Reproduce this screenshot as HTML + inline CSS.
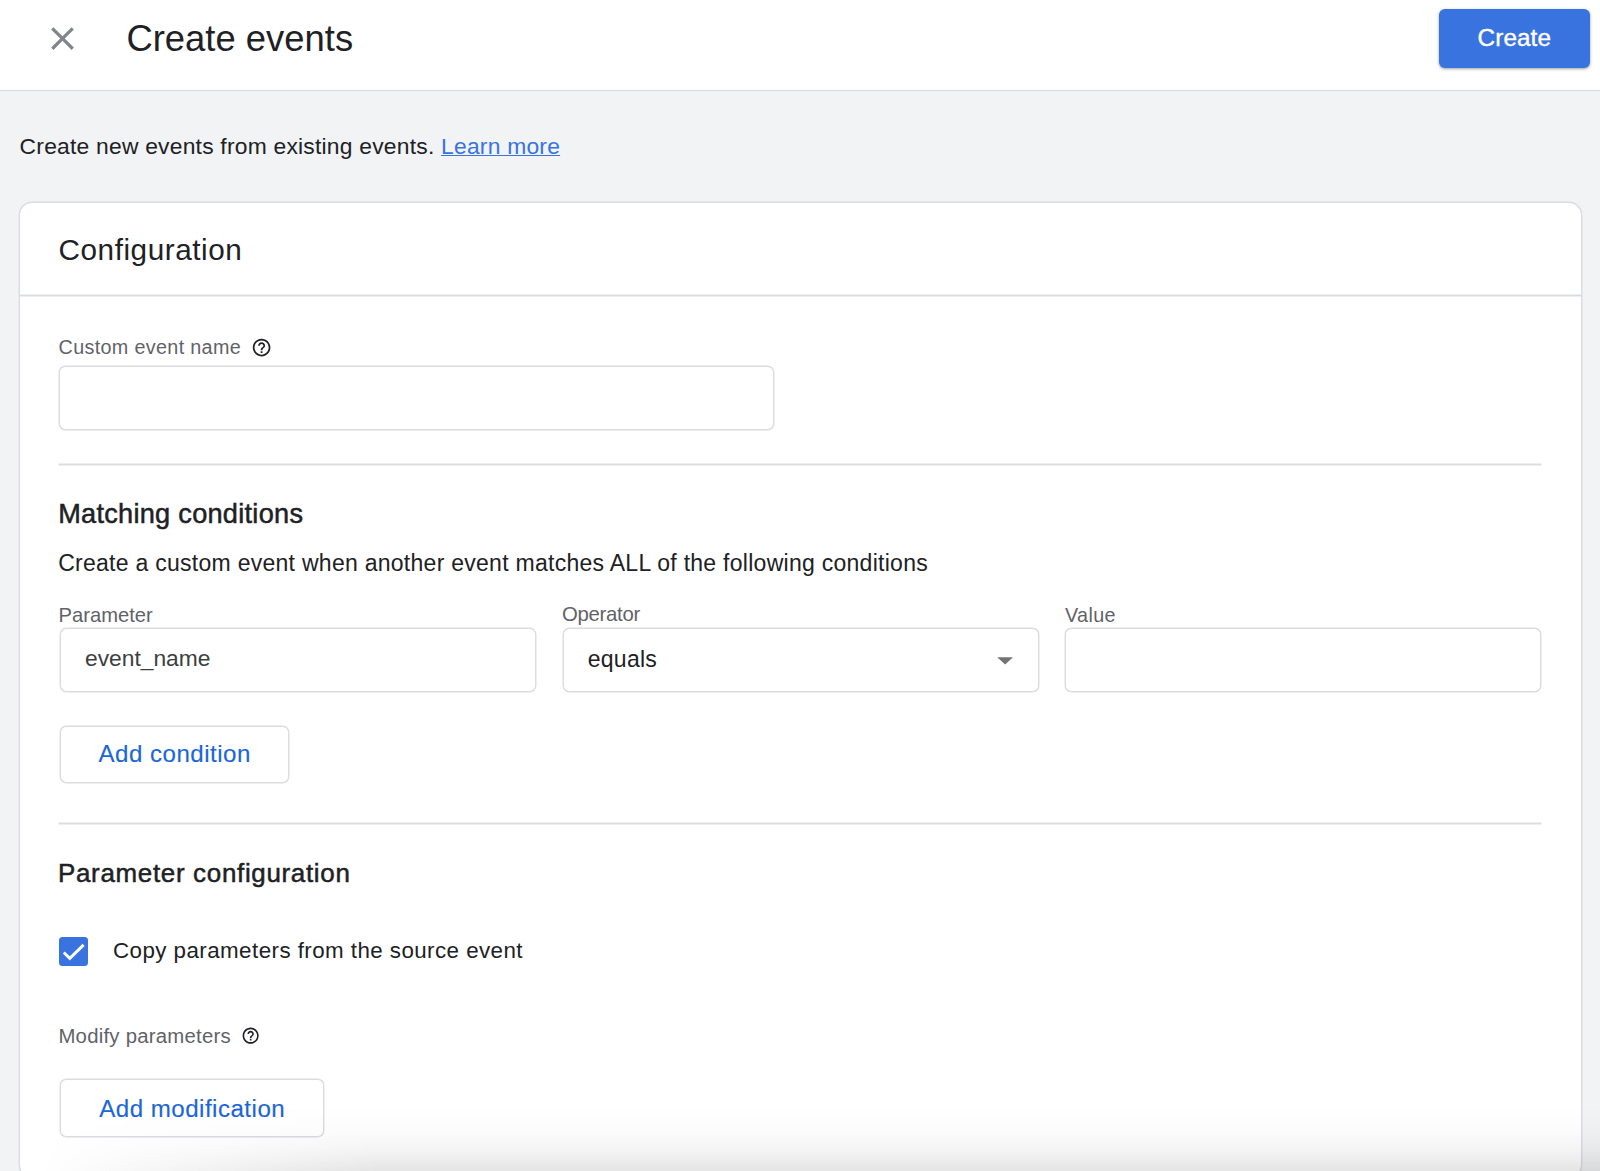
<!DOCTYPE html>
<html><head><meta charset="utf-8"><title>Create events</title>
<style>
html,body{margin:0;padding:0;}
body{width:1600px;height:1171px;overflow:hidden;background:#f1f3f4;position:relative;font-family:"Liberation Sans",sans-serif;}
.abs{position:absolute;}
.t{position:absolute;white-space:nowrap;}
#hdr{position:absolute;left:0;top:0;width:1600px;height:90px;background:#fff;border-bottom:1px solid #dadce0;}
#btn{position:absolute;left:1438.5px;top:9px;width:151.5px;height:58.5px;background:#3873e0;border-radius:6px;box-shadow:0 1px 2px rgba(60,64,67,.3),0 1px 3px 1px rgba(60,64,67,.15);}
#card{position:absolute;left:19px;top:202px;width:1563px;height:976px;background:#fff;border:1px solid #dadce0;border-radius:13px;box-sizing:border-box;box-shadow:0 0 0 .4px #dadce0;}
.hl{position:absolute;height:1px;background:#dadce0;box-shadow:0 0 0 .45px #dadce0;}
.box{position:absolute;border:1px solid #dadce0;border-radius:6.5px;box-sizing:border-box;background:#fff;box-shadow:0 0 0 .45px #dadce0;}
#shadow{position:absolute;left:0;top:1106px;width:1600px;height:65px;background:linear-gradient(to bottom,rgba(0,0,0,0) 0%,rgba(0,0,0,.012) 35%,rgba(0,0,0,.04) 65%,rgba(0,0,0,.075) 85%,rgba(0,0,0,.105) 100%);
 -webkit-mask-image:linear-gradient(to right,transparent 40px,#000 380px);}
</style></head><body>
<div id="hdr"></div>
<svg class="abs" style="left:42.5px;top:18.6px" width="39" height="39" viewBox="0 0 24 24"><path fill="#80868b" d="M19 6.41L17.59 5 12 10.59 6.41 5 5 6.41 10.59 12 5 17.59 6.41 19 12 13.41 17.59 19 19 17.59 13.41 12z"/></svg>
<div id="btn"></div>
<div id="card"></div>
<div class="hl" style="left:20px;top:295px;width:1561px"></div>
<div class="box" style="left:59px;top:366px;width:714.5px;height:64px"></div>
<div class="hl" style="left:59px;top:463.5px;width:1482px"></div>
<div class="box" style="left:59.5px;top:628px;width:476.5px;height:64px"></div>
<div class="box" style="left:562.5px;top:628px;width:476.5px;height:64px"></div>
<div class="box" style="left:1065px;top:628px;width:475.5px;height:64px"></div>
<svg class="abs" style="left:996px;top:655px" width="18" height="11" viewBox="0 0 18 11"><path d="M1.2 2.2h15.8L9.2 9.4z" fill="#737373"/></svg>
<div class="box" style="left:59.5px;top:725.5px;width:229.5px;height:57.5px"></div>
<div class="hl" style="left:59px;top:822.5px;width:1482px"></div>
<svg class="abs" style="left:59.1px;top:936.6px" width="29" height="29" viewBox="0 0 29 29"><rect x="0" y="0" width="29" height="29" rx="3.5" fill="#3873e0"/><path d="M4.8 15.5L10.8 21.4 24.6 7.9" fill="none" stroke="#fff" stroke-width="2.9"/></svg>
<div class="box" style="left:59.5px;top:1079px;width:264px;height:57.5px"></div>
<svg class="abs" style="left:250.75px;top:337.00px" width="21.2" height="21.2" viewBox="0 0 24 24"><path fill="#202124" d="M11 18h2v-2h-2v2zm1-16C6.48 2 2 6.48 2 12s4.48 10 10 10 10-4.48 10-10S17.52 2 12 2zm0 18c-4.41 0-8-3.59-8-8s3.59-8 8-8 8 3.59 8 8-3.59 8-8 8zm0-14c-2.21 0-4 1.79-4 4h2c0-1.1.9-2 2-2s2 .9 2 2c0 2-3 1.75-3 5h2c0-2.25 3-2.5 3-5 0-2.21-1.79-4-4-4z"/></svg>
<svg class="abs" style="left:241.15px;top:1026.25px" width="19.3" height="19.3" viewBox="0 0 24 24"><path fill="#202124" d="M11 18h2v-2h-2v2zm1-16C6.48 2 2 6.48 2 12s4.48 10 10 10 10-4.48 10-10S17.52 2 12 2zm0 18c-4.41 0-8-3.59-8-8s3.59-8 8-8 8 3.59 8 8-3.59 8-8 8zm0-14c-2.21 0-4 1.79-4 4h2c0-1.1.9-2 2-2s2 .9 2 2c0 2-3 1.75-3 5h2c0-2.25 3-2.5 3-5 0-2.21-1.79-4-4-4z"/></svg>
<div class="t" id="title" style="left:126.40px;top:21.00px;font-size:36.38px;line-height:36.38px;color:#202124;font-weight:400;letter-spacing:0.024px;">Create events</div>
<div class="t" id="btntext" style="left:1477.60px;top:25.55px;font-size:24.28px;line-height:24.28px;color:#ffffff;font-weight:400;letter-spacing:0.108px;-webkit-text-stroke:0.4px #ffffff;">Create</div>
<div class="t" id="subtitle" style="left:19.60px;top:134.76px;font-size:22.84px;line-height:22.84px;color:#202124;font-weight:400;letter-spacing:0.227px;">Create new events from existing events. <span style="color:#3873e0;text-decoration:underline;text-underline-offset:1px;text-decoration-thickness:1.4px">Learn more</span></div>
<div class="t" id="config" style="left:58.50px;top:234.60px;font-size:29.71px;line-height:29.71px;color:#202124;font-weight:400;letter-spacing:0.546px;">Configuration</div>
<div class="t" id="cen" style="left:58.60px;top:338.46px;font-size:19.78px;line-height:19.78px;color:#5f6368;font-weight:400;letter-spacing:0.326px;">Custom event name</div>
<div class="t" id="match" style="left:58.20px;top:500.31px;font-size:27.16px;line-height:27.16px;color:#202124;font-weight:400;letter-spacing:0.264px;-webkit-text-stroke:0.5px #202124;">Matching conditions</div>
<div class="t" id="desc" style="left:58.20px;top:551.83px;font-size:23.00px;line-height:23.00px;color:#202124;font-weight:400;letter-spacing:0.271px;">Create a custom event when another event matches ALL of the following conditions</div>
<div class="t" id="param" style="left:58.60px;top:604.63px;font-size:20.16px;line-height:20.16px;color:#5f6368;font-weight:400;letter-spacing:0.007px;">Parameter</div>
<div class="t" id="oper" style="left:562.00px;top:603.64px;font-size:20.33px;line-height:20.33px;color:#5f6368;font-weight:400;letter-spacing:-0.287px;">Operator</div>
<div class="t" id="value" style="left:1065.00px;top:605.54px;font-size:19.75px;line-height:19.75px;color:#5f6368;font-weight:400;letter-spacing:0.368px;">Value</div>
<div class="t" id="evname" style="left:85.00px;top:647.30px;font-size:22.80px;line-height:22.80px;color:#3c4043;font-weight:400;letter-spacing:-0.011px;">event_name</div>
<div class="t" id="equals" style="left:587.80px;top:647.61px;font-size:23.02px;line-height:23.02px;color:#202124;font-weight:400;letter-spacing:0.230px;">equals</div>
<div class="t" id="addcond" style="left:98.50px;top:741.53px;font-size:24.07px;line-height:24.07px;color:#1b66d8;font-weight:400;letter-spacing:0.504px;-webkit-text-stroke:0.15px #1b66d8;">Add condition</div>
<div class="t" id="pconf" style="left:58.00px;top:861.23px;font-size:25.95px;line-height:25.95px;color:#202124;font-weight:400;letter-spacing:0.683px;-webkit-text-stroke:0.5px #202124;">Parameter configuration</div>
<div class="t" id="copy" style="left:113.00px;top:940.48px;font-size:22.35px;line-height:22.35px;color:#202124;font-weight:400;letter-spacing:0.441px;">Copy parameters from the source event</div>
<div class="t" id="modp" style="left:58.40px;top:1025.78px;font-size:20.35px;line-height:20.35px;color:#5f6368;font-weight:400;letter-spacing:0.245px;">Modify parameters</div>
<div class="t" id="addmod" style="left:99.20px;top:1096.65px;font-size:24.15px;line-height:24.15px;color:#1b66d8;font-weight:400;letter-spacing:0.469px;-webkit-text-stroke:0.15px #1b66d8;">Add modification</div>
<div id="shadow"></div>
</body></html>
